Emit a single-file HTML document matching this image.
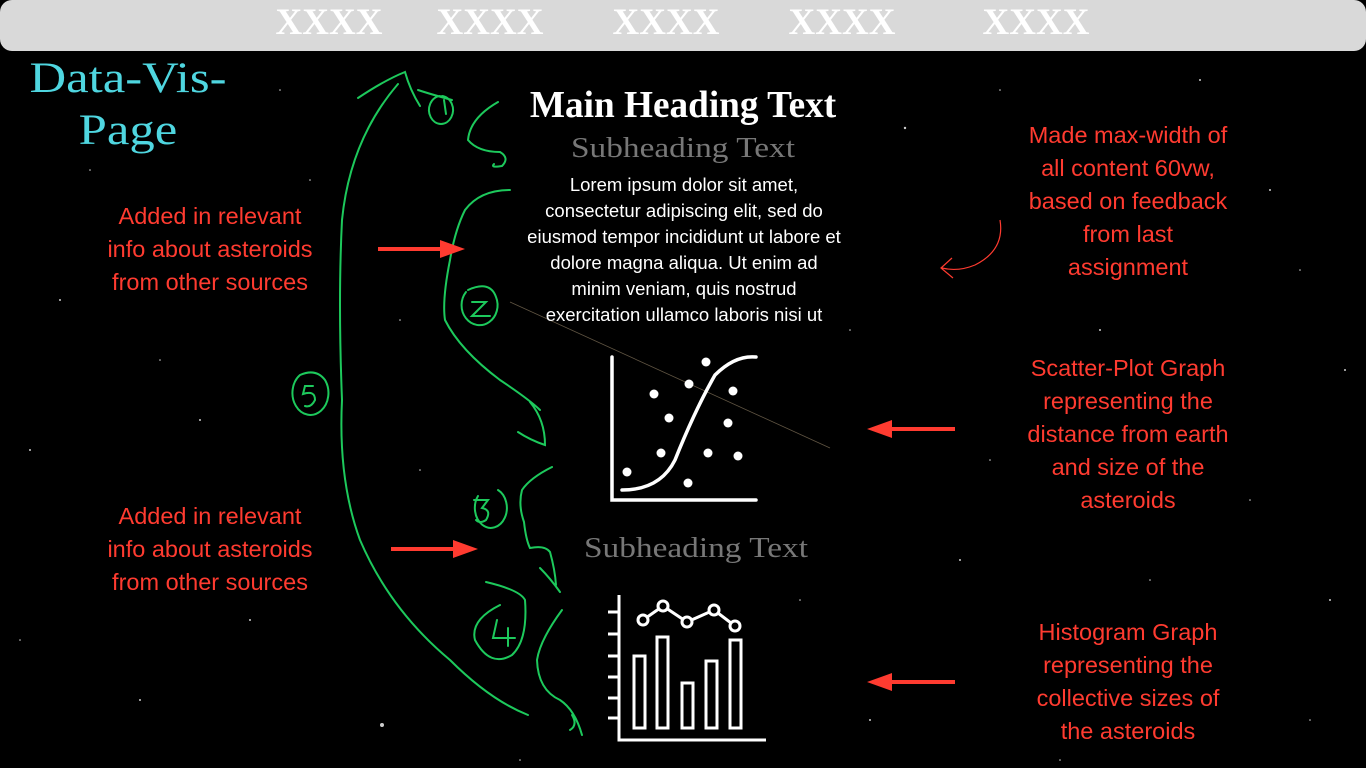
<!DOCTYPE html>
<html><head><meta charset="utf-8"><style>
html,body{margin:0;padding:0;width:1366px;height:768px;overflow:hidden;background:#000;}
body{position:relative;font-family:"Liberation Sans",sans-serif;}
.nav{position:absolute;left:0;top:0;width:1366px;height:51px;background:#d9d9d9;border-radius:12px;}
.x{position:absolute;top:2px;color:#fff;font-family:"Liberation Serif",serif;font-weight:bold;font-size:37px;transform:translateX(-50%);line-height:42px;}
.t{position:absolute;text-align:center;transform:translateX(-50%);white-space:nowrap;}
.red{color:#ff3b30;font-size:23.5px;line-height:33px;}
</style></head><body>
<svg style="position:absolute;left:0;top:0" width="1366" height="768">
<g fill="#fff" opacity="0.8">
<circle cx="905" cy="128" r="1.2"/><circle cx="382" cy="725" r="2"/><circle cx="1270" cy="190" r="1"/><circle cx="60" cy="300" r="1"/><circle cx="200" cy="420" r="1"/><circle cx="960" cy="560" r="1"/><circle cx="1100" cy="330" r="1"/><circle cx="870" cy="720" r="1"/><circle cx="1330" cy="600" r="1"/><circle cx="140" cy="700" r="1"/><circle cx="1200" cy="80" r="1"/><circle cx="30" cy="450" r="1"/><circle cx="1345" cy="370" r="1"/><circle cx="250" cy="620" r="1"/>
<circle cx="90" cy="170" r="0.8"/><circle cx="280" cy="90" r="0.8"/><circle cx="310" cy="180" r="0.8"/><circle cx="20" cy="640" r="0.8"/><circle cx="230" cy="520" r="0.8"/><circle cx="1000" cy="90" r="0.8"/><circle cx="1300" cy="270" r="0.8"/><circle cx="990" cy="460" r="0.8"/><circle cx="1250" cy="500" r="0.8"/><circle cx="1310" cy="720" r="0.8"/><circle cx="800" cy="600" r="0.8"/><circle cx="850" cy="330" r="0.8"/><circle cx="420" cy="470" r="0.8"/><circle cx="400" cy="320" r="0.8"/><circle cx="160" cy="360" r="0.8"/><circle cx="1150" cy="580" r="0.8"/><circle cx="1060" cy="760" r="0.8"/><circle cx="520" cy="760" r="0.8"/>
</g>
<g fill="none" stroke="#1dc95c" stroke-width="2" stroke-linecap="round">
<path d="M358 98 Q385 80 405 72 Q410 90 420 106"/>
<path d="M398 84 Q350 140 342 220 Q338 300 342 400 Q338 480 360 540 Q390 610 450 660 Q490 700 528 715"/>
<path d="M418 90 Q430 94 452 100 M440 96 a12 14 0 1 0 2 0 M444 100 l2 14"/>
<path d="M498 102 Q470 118 468 140 Q478 152 500 152 Q510 158 502 166 Q490 168 494 164"/>
<path d="M510 190 Q480 190 465 210 Q455 230 450 260 Q442 300 445 320 Q460 350 500 380 Q530 400 540 410 M530 402 Q545 420 545 445 Q530 440 518 432"/>
<path d="M466 292 a18 20 0 1 0 30 5 Q490 280 468 290 M472 302 l14 0 l-14 14 l18 0"/>
<path d="M300 375 a18 22 0 1 0 25 5 Q316 368 300 375 M313 386 l-8 0 l-2 8 q12 -4 12 6 q-4 8 -10 6"/>
<path d="M552 467 Q530 478 522 490 Q518 505 524 522 Q526 540 530 548 Q545 545 550 552 Q555 570 556 585 M540 568 Q550 578 560 592"/>
<path d="M478 496 a16 20 0 1 0 20 -6 M474 500 l14 0 l-6 8 q10 2 4 12 q-6 4 -10 0"/>
<path d="M486 582 Q520 590 525 600 Q528 640 512 655 Q490 668 475 640 Q470 620 500 605 M497 620 l-4 18 l22 0 M508 628 l0 18"/>
<path d="M562 610 Q540 640 537 660 Q538 690 560 700 Q575 710 582 735 M572 715 Q578 725 570 730"/>
</g>
<g fill="#ff3b30" stroke="#ff3b30">
<line x1="378" y1="249" x2="445" y2="249" stroke-width="4"/><polygon points="440,240 465,249 440,258" stroke="none"/>
<line x1="391" y1="549" x2="458" y2="549" stroke-width="4"/><polygon points="453,540 478,549 453,558" stroke="none"/>
<line x1="890" y1="429" x2="955" y2="429" stroke-width="4"/><polygon points="892,420 867,429 892,438" stroke="none"/>
<line x1="890" y1="682" x2="955" y2="682" stroke-width="4"/><polygon points="892,673 867,682 892,691" stroke="none"/>
</g>
<path d="M1000 220 Q1005 250 975 265 Q958 272 942 268 M952 258 L941 268 L953 278" fill="none" stroke="#ff3b30" stroke-width="1.2"/>
<line x1="510" y1="302" x2="830" y2="448" stroke="#8a7a60" stroke-width="0.8" opacity="0.7"/>
<g stroke="#fff" stroke-width="3.5" fill="none" stroke-linecap="round">
<path d="M612 357 L612 500 L756 500"/>
<path d="M622 490 Q660 490 675 460 Q695 410 715 375 Q735 355 756 357"/>
</g>
<g fill="#fff">
<circle cx="627" cy="472" r="4.5"/><circle cx="654" cy="394" r="4.5"/><circle cx="669" cy="418" r="4.5"/><circle cx="661" cy="453" r="4.5"/><circle cx="689" cy="384" r="4.5"/><circle cx="706" cy="362" r="4.5"/><circle cx="733" cy="391" r="4.5"/><circle cx="728" cy="423" r="4.5"/><circle cx="708" cy="453" r="4.5"/><circle cx="738" cy="456" r="4.5"/><circle cx="688" cy="483" r="4.5"/>
</g>
<g stroke="#fff" stroke-width="3" fill="none">
<path d="M619 595 L619 740 L766 740"/>
<path d="M608 612h11M608 634h11M608 656h11M608 677h11M608 698h11M608 718h11"/>
<rect x="634" y="656" width="11" height="72"/><rect x="657" y="637" width="11" height="91"/><rect x="682" y="683" width="11" height="45"/><rect x="706" y="661" width="11" height="67"/><rect x="730" y="640" width="11" height="88"/>
<path d="M643 620 L663 606 L687 622 L714 610 L735 626"/>
<circle cx="643" cy="620" r="5" fill="#000"/><circle cx="663" cy="606" r="5" fill="#000"/><circle cx="687" cy="622" r="5" fill="#000"/><circle cx="714" cy="610" r="5" fill="#000"/><circle cx="735" cy="626" r="5" fill="#000"/>
</g>
</svg>
<div class="nav">
<span class="x" style="left:329px">XXXX</span><span class="x" style="left:490px">XXXX</span><span class="x" style="left:666px">XXXX</span><span class="x" style="left:842px">XXXX</span><span class="x" style="left:1036px">XXXX</span>
</div>
<div class="t" style="left:128px;top:53px;color:#4fd6e0;font-family:'Liberation Serif',serif;font-size:43px;line-height:52px;transform:translateX(-50%) scaleX(1.18);">Data-Vis-<br>Page</div>
<div class="t" style="left:683px;top:83px;color:#fff;font-family:'Liberation Serif',serif;font-weight:bold;font-size:38px;line-height:44px;transform:translateX(-50%) scaleX(0.98);">Main Heading Text</div>
<div class="t" style="left:683px;top:131px;color:#777;font-family:'Liberation Serif',serif;font-size:29px;line-height:34px;transform:translateX(-50%) scaleX(1.15);">Subheading Text</div>
<div class="t" style="left:684px;top:172px;color:#fff;font-size:18.5px;line-height:26px;">Lorem ipsum dolor sit amet,<br>consectetur adipiscing elit, sed do<br>eiusmod tempor incididunt ut labore et<br>dolore magna aliqua. Ut enim ad<br>minim veniam, quis nostrud<br>exercitation ullamco laboris nisi ut</div>
<div class="t" style="left:696px;top:531px;color:#777;font-family:'Liberation Serif',serif;font-size:29px;line-height:34px;transform:translateX(-50%) scaleX(1.15);">Subheading Text</div>
<div class="t red" style="left:210px;top:200px;">Added in relevant<br>info about asteroids<br>from other sources</div>
<div class="t red" style="left:210px;top:500px;">Added in relevant<br>info about asteroids<br>from other sources</div>
<div class="t red" style="left:1128px;top:119px;">Made max-width of<br>all content 60vw,<br>based on feedback<br>from last<br>assignment</div>
<div class="t red" style="left:1128px;top:352px;">Scatter-Plot Graph<br>representing the<br>distance from earth<br>and size of the<br>asteroids</div>
<div class="t red" style="left:1128px;top:616px;">Histogram Graph<br>representing the<br>collective sizes of<br>the asteroids</div>
</body></html>
